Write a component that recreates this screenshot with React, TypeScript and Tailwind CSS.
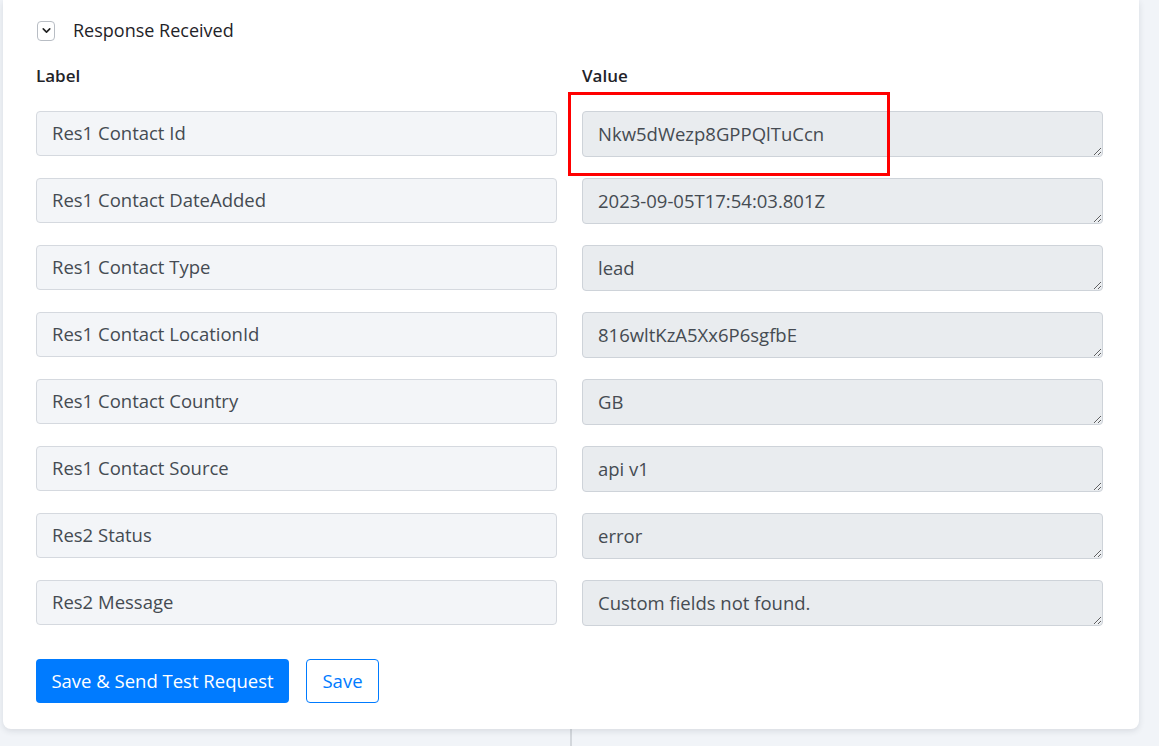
import { ChevronDown } from "lucide-react";

const FIELDS = [
  { label: "Res1 Contact Id", value: "Nkw5dWezp8GPPQlTuCcn" },
  { label: "Res1 Contact DateAdded", value: "2023-09-05T17:54:03.801Z" },
  { label: "Res1 Contact Type", value: "lead" },
  { label: "Res1 Contact LocationId", value: "816wltKzA5Xx6P6sgfbE" },
  { label: "Res1 Contact Country", value: "GB" },
  { label: "Res1 Contact Source", value: "api v1" },
  { label: "Res2 Status", value: "error" },
  { label: "Res2 Message", value: "Custom fields not found." },
];

export default function App() {
  return (
    <div
      className="h-[746px] w-[1159px] overflow-hidden bg-[#f1f4f8] pl-[3px]"
      style={{ fontFamily: "'Open Sans', Lato, sans-serif" }}
    >
      <div className="relative w-[1136px] rounded-b-lg bg-white pb-[26px] pl-[33px] pt-[17px] shadow-[0_2px_6px_rgba(30,40,60,0.12)]">
        <div className="flex items-center">
          <span className="ml-[1px] flex h-[20px] w-[18px] items-center justify-center rounded-[4px] border border-[#b8bdc4]">
            <ChevronDown size={13} strokeWidth={3} className="text-[#222]" />
          </span>
          <span className="ml-[18px] text-[18px] text-[#1f2328]">Response Received</span>
        </div>

        <div className="mt-[19px] grid grid-cols-[521px_521px] gap-x-[25px]">
          <p className="text-[17px] font-semibold text-[#1f2328]">Label</p>
          <p className="text-[17px] font-semibold text-[#1f2328]">Value</p>
        </div>

        <div className="mt-[22px] grid grid-cols-[521px_521px] gap-x-[25px] gap-y-[21px]">
          {FIELDS.map((f) => (
            <div key={f.label} className="contents">
              <div className="flex h-[45px] items-center rounded-[4px] border border-[#d5d9df] bg-[#f3f5f8] px-[15px] text-[18.5px] text-[#454b52]">
                {f.label}
              </div>
              <textarea
                readOnly
                value={f.value}
                className="h-[46px] rounded-[4px] border border-[#ced3d9] bg-[#e9ecef] px-[15px] py-[8px] text-[18.5px] leading-[27px] text-[#454b52] outline-none"
              />
            </div>
          ))}
        </div>

        <div className="mt-[33px] flex gap-[17px]">
          <button className="h-[44px] w-[253px] rounded-[4px] bg-[#007bff] text-[18.5px] text-white">
            Save &amp; Send Test Request
          </button>
          <button className="h-[44px] w-[73px] rounded-[4px] border border-[#007bff] bg-white text-[18.5px] text-[#007bff]">
            Save
          </button>
        </div>

        {/* highlight around the first value */}
        <div className="pointer-events-none absolute left-[565px] top-[92px] h-[84px] w-[322px] border-[3px] border-[#ff0000]" />
      </div>

      <div className="ml-[567px] h-[20px] w-[2px] bg-[#d3d7dc]" />
    </div>
  );
}
